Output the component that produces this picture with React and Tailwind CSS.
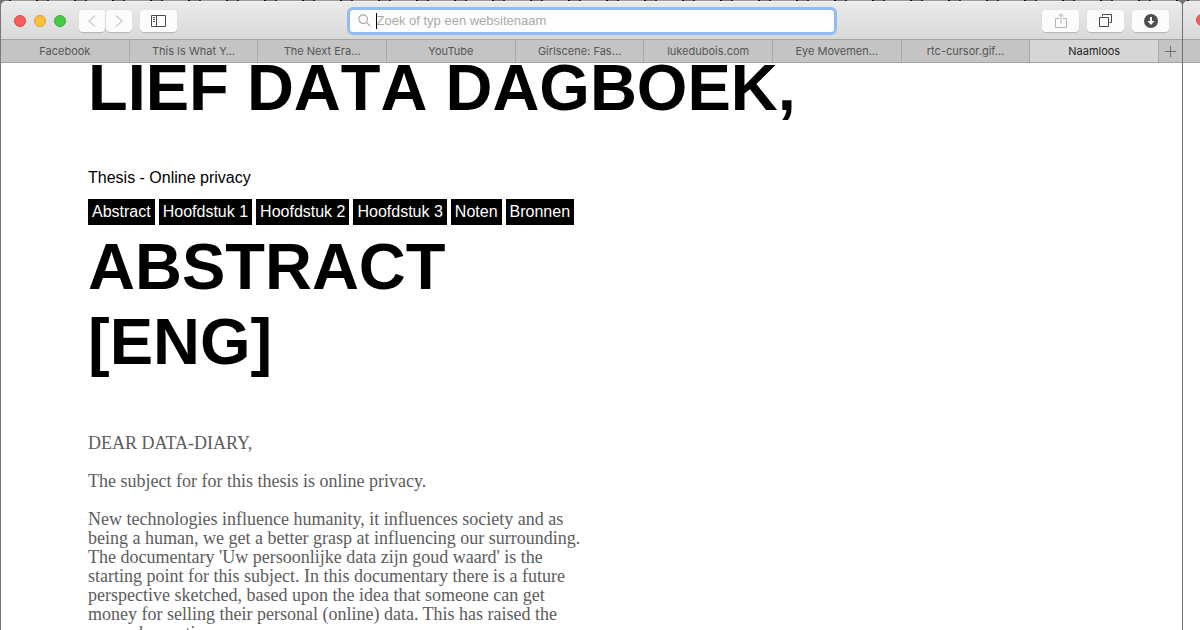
const tabs = [
  'Facebook',
  'This Is What Y…',
  'The Next Era…',
  'YouTube',
  'Girlscene: Fas…',
  'lukedubois.com',
  'Eye Movemen…',
  'rtc-cursor.gif…',
  'Naamloos',
];

const chapters = ['Abstract', 'Hoofdstuk 1', 'Hoofdstuk 2', 'Hoofdstuk 3', 'Noten', 'Bronnen'];

function ToolButton({ label, width, children }) {
  return (
    <button
      type="button"
      aria-label={label}
      className={`${width} flex h-[22px] items-center justify-center rounded-[4px] bg-[#fcfcfc] shadow-[0_1px_1px_rgba(0,0,0,0.18)]`}
    >
      {children}
    </button>
  );
}

function TrafficLights() {
  return (
    <div className="flex gap-2">
      <button type="button" aria-label="Sluit" className="size-3 rounded-full border border-[#e0443e] bg-[#f65f5b]" />
      <button type="button" aria-label="Minimaliseer" className="size-3 rounded-full border border-[#dea035] bg-[#fbbe3e]" />
      <button type="button" aria-label="Vergroot" className="size-3 rounded-full border border-[#30b03a] bg-[#45cb47]" />
    </div>
  );
}

function Toolbar() {
  return (
    <header className="grid h-[38px] shrink-0 grid-cols-[1fr_minmax(0,490px)_1fr] items-center rounded-t-[5px] border-t border-[#f5f5f5] bg-linear-to-b from-[#ebebeb] to-[#d9d9d9]">
      <div className="flex items-center pl-[13px]">
        <TrafficLights />
        <div className="ml-[13px] flex gap-px">
          <ToolButton label="Vorige" width="w-[26px]">
            <svg width="8" height="14" viewBox="0 0 8 14" fill="none" stroke="#cfcfcf" strokeWidth="1.4">
              <path d="M7 1.500 1 7l6 5.500" />
            </svg>
          </ToolButton>
          <ToolButton label="Volgende" width="w-[26px]">
            <svg width="8" height="14" viewBox="0 0 8 14" fill="none" stroke="#cfcfcf" strokeWidth="1.4">
              <path d="m1 1.500 6 5.500-6 5.500" />
            </svg>
          </ToolButton>
        </div>
        <div className="ml-2">
          <ToolButton label="Navigatiekolom" width="w-[37px]">
            <svg width="15" height="12" viewBox="0 0 15 12" fill="none" stroke="#4a4a4a">
              <path d="M.5.5h14v11H.5zM5.5.5v11M2 2.500h2M2 4.500h2M2 6.500h2" />
            </svg>
          </ToolButton>
        </div>
      </div>

      <label className="flex h-7 items-center rounded-[6px] border-[3px] border-[#92bdf2] bg-[#fdfdfd] pl-2">
        <svg width="13" height="13" viewBox="0 0 13 13" fill="none" stroke="#a3a3a3" strokeWidth="1.1">
          <circle cx="5.2" cy="5.2" r="4.3" />
          <path d="m8.4 8.4 3.8 3.8" />
        </svg>
        <span className="ml-[5px] h-4 w-px bg-black" />
        <input
          type="text"
          aria-label="Adres"
          placeholder="Zoek of typ een websitenaam"
          className="h-full min-w-0 flex-1 bg-transparent text-[13px] text-black outline-none placeholder:text-[#ababab]"
        />
      </label>

      <div className="flex justify-end gap-2 pr-[13px]">
        <ToolButton label="Deel" width="w-[37px]">
          <svg width="12" height="16" viewBox="0 0 12 16" fill="none" stroke="#b4b4b4">
            <path d="M4 5.5H.5v9h11v-9H8M6 10.500V1M3.300 3.500 6 .8l2.700 2.700" />
          </svg>
        </ToolButton>
        <ToolButton label="Toon alle tabs" width="w-[37px]">
          <svg width="13" height="13" viewBox="0 0 13 13" fill="none" stroke="#4a4a4a">
            <path d="M.5 3.500h9v9h-9zM3.500 2.500v-2h9v8h-2" />
          </svg>
        </ToolButton>
        <ToolButton label="Downloads" width="w-[37px]">
          <svg width="14" height="14" viewBox="0 0 14 14">
            <circle cx="7" cy="7" r="7" fill="#4d4d4d" />
            <path d="M6 3h2v4h2.500L7 11 3.500 7H6z" fill="#fff" />
          </svg>
        </ToolButton>
      </div>
    </header>
  );
}

function TabBar() {
  return (
    <nav aria-label="Tabs" className="flex h-6 shrink-0 border-y border-[#a3a3a3] bg-[#c4c4c4] font-[Inter,'Liberation_Sans',sans-serif] text-[11px]">
      {tabs.map((tab, i) => (
        <button
          key={tab}
          type="button"
          className={`min-w-0 flex-1 truncate border-r border-[#a9a9a9] ${
            i === tabs.length - 1 ? 'bg-[#d6d6d6] text-[#222]' : 'text-[#555]'
          }`}
        >
          {tab}
        </button>
      ))}
      <button type="button" aria-label="Nieuwe tab" className="flex w-[23px] items-center justify-center">
        <svg width="11" height="11" viewBox="0 0 11 11" stroke="#6e6e6e">
          <path d="M5.500 0v11M0 5.500h11" />
        </svg>
      </button>
    </nav>
  );
}

function Thesis() {
  return (
    <main className="min-h-0 flex-1 overflow-hidden bg-white pl-[87px]">
      <h1 className="-mt-[13px] text-[65px] leading-[75px] font-bold text-black [font-kerning:none]">LIEF DATA DAGBOEK,</h1>
      <p className="mt-[41px] text-[16px] leading-6 text-black">Thesis - Online privacy</p>
      <nav aria-label="Hoofdstukken" className="mt-[9px] flex gap-1">
        {chapters.map((chapter) => (
          <a key={chapter} href="#" className="bg-black px-1 text-[16px] leading-[26px] text-white">
            {chapter}
          </a>
        ))}
      </nav>
      <h2 className="mt-1 text-[65px] leading-[75px] font-bold text-black">
        ABSTRACT
        <br />
        [ENG]
      </h2>
      <div className="mt-[55px] flex flex-col gap-[19px] font-['Liberation_Serif',serif] text-[18px] leading-[19px] whitespace-nowrap text-[#5c5c5c]">
        <p>DEAR DATA-DIARY,</p>
        <p>The subject for for this thesis is online privacy.</p>
        <p>
          New technologies influence humanity, it influences society and as
          <br />
          being a human, we get a better grasp at influencing our surrounding.
          <br />
          The documentary 'Uw persoonlijke data zijn goud waard' is the
          <br />
          starting point for this subject. In this documentary there is a future
          <br />
          perspective sketched, based upon the idea that someone can get
          <br />
          money for selling their personal (online) data. This has raised the
          <br />
          research question:
        </p>
      </div>
    </main>
  );
}

export default function App() {
  return (
    <div className="flex h-screen overflow-hidden bg-[repeating-linear-gradient(90deg,#777_0_9px,#222_9px_11px,#999_11px_36px,#111_36px_38px)] pt-px pl-px font-['Liberation_Sans',Arial,sans-serif]">
      <div className="flex min-w-0 flex-1 flex-col">
        <Toolbar />
        <TabBar />
        <Thesis />
      </div>
      <div className="w-px bg-[#6f6f6f]" />
      <aside className="flex w-[17px] flex-col overflow-hidden rounded-tl-[5px] bg-white">
        <div className="flex h-[38px] shrink-0 items-center bg-linear-to-b from-[#ebebeb] to-[#d9d9d9] pl-[13px]">
          <span className="size-3 shrink-0 rounded-full border border-[#e0443e] bg-[#f65f5b]" />
        </div>
        <div className="h-6 shrink-0 border-y border-[#a3a3a3] bg-[#c4c4c4]" />
      </aside>
    </div>
  );
}
